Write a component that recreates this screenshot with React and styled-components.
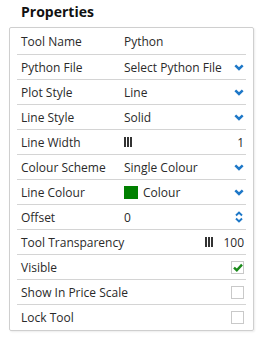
import styled, { createGlobalStyle } from 'styled-components';

const GlobalStyle = createGlobalStyle`
  body {
    margin: 0;
    background: #fff;
    font-family: "Open Sans", "Liberation Sans", sans-serif;
    color: #2a2a2a;
  }
`;

const Page = styled.div`
  width: 260px;
  height: 341px;
  padding: 0 7px 0 9px;
  box-sizing: border-box;
`;

const Title = styled.h1`
  margin: 0;
  padding: 2px 0 0 12px;
  height: 27px;
  box-sizing: border-box;
  font-size: 14px;
  font-weight: 700;
  line-height: 20px;
  color: #111;
`;

const Card = styled.div`
  border: 1px solid #cfcfcf;
  border-radius: 2px;
  box-shadow: 1px 1px 2px rgba(0, 0, 0, 0.08);
  padding: 1px 7px 0 7px;
  width: 245px;
  box-sizing: border-box;
`;

const Row = styled.div`
  display: flex;
  align-items: center;
  height: ${({ first }) => (first ? '26px' : '25px')};
  box-sizing: border-box;
  padding: 0 2px 0 4px;
  border-bottom: ${({ last }) => (last ? 'none' : '1px solid #d4d4d4')};
  font-size: 12px;
`;

const Label = styled.div`
  width: ${({ wide }) => (wide ? 'auto' : '103px')};
  flex-shrink: 0;
  white-space: nowrap;
`;

const Value = styled.div`
  flex: 1;
  display: flex;
  align-items: center;
  gap: 4px;
  white-space: nowrap;
`;

const Grow = styled.span`
  flex: 1;
`;

const Swatch = styled.span`
  width: 14px;
  height: 13px;
  background: #008000;
  margin-right: 1px;
`;

const Checkbox = styled.span`
  width: 11px;
  height: 11px;
  border: 1px solid #c9c9c9;
  display: flex;
  align-items: center;
  justify-content: center;
  margin-left: auto;
`;

const Num = styled.span`
  margin-left: ${({ gap }) => gap || 0}px;
`;

function Chevron() {
  return (
    <svg width="10" height="7" viewBox="0 0 10 7">
      <path d="M1.3 1.3 L5 4.9 L8.7 1.3" fill="none" stroke="#1e78c8" strokeWidth="2.5" />
    </svg>
  );
}

function Spinner() {
  return (
    <svg width="10" height="12" viewBox="0 0 10 12">
      <path d="M2 4.4 L5 1.6 L8 4.4" fill="none" stroke="#1e78c8" strokeWidth="2" />
      <path d="M2 7.6 L5 10.4 L8 7.6" fill="none" stroke="#1e78c8" strokeWidth="2" />
    </svg>
  );
}

function Bars() {
  return (
    <svg width="8" height="10" viewBox="0 0 8 10">
      <rect x="0" y="0" width="2" height="10" fill="#333" />
      <rect x="3" y="0" width="2" height="10" fill="#333" />
      <rect x="6" y="0" width="2" height="10" fill="#333" />
    </svg>
  );
}

function Check() {
  return (
    <svg width="10" height="9" viewBox="0 0 10 9">
      <path d="M1 4.6 L3.8 7.2 L9 1.6" fill="none" stroke="#1a8a1a" strokeWidth="2.4" />
    </svg>
  );
}

const rows = [
  { label: 'Tool Name', kind: 'text', value: 'Python' },
  { label: 'Python File', kind: 'select', value: 'Select Python File' },
  { label: 'Plot Style', kind: 'select', value: 'Line' },
  { label: 'Line Style', kind: 'select', value: 'Solid' },
  { label: 'Line Width', kind: 'width', value: '1' },
  { label: 'Colour Scheme', kind: 'select', value: 'Single Colour' },
  { label: 'Line Colour', kind: 'colour', value: 'Colour' },
  { label: 'Offset', kind: 'spin', value: '0' },
  { label: 'Tool Transparency', kind: 'transparency', value: '100' },
  { label: 'Visible', kind: 'check', checked: true },
  { label: 'Show In Price Scale', kind: 'check' },
  { label: 'Lock Tool', kind: 'check' },
];

function Field({ row }) {
  switch (row.kind) {
    case 'select':
      return (
        <Value>
          <Grow>{row.value}</Grow>
          <Chevron />
        </Value>
      );
    case 'colour':
      return (
        <Value>
          <Swatch />
          <Grow>{row.value}</Grow>
          <Chevron />
        </Value>
      );
    case 'spin':
      return (
        <Value>
          <Grow>{row.value}</Grow>
          <Spinner />
        </Value>
      );
    case 'width':
      return (
        <Value>
          <Bars />
          <Grow />
          <Num>{row.value}</Num>
        </Value>
      );
    case 'transparency':
      return (
        <Value>
          <Grow />
          <Bars />
          <Num gap={6}>{row.value}</Num>
        </Value>
      );
    case 'check':
      return (
        <Value>
          <Checkbox>{row.checked && <Check />}</Checkbox>
        </Value>
      );
    default:
      return <Value>{row.value}</Value>;
  }
}

export default function App() {
  return (
    <>
      <GlobalStyle />
      <Page>
        <Title>Properties</Title>
        <Card>
          {rows.map((row, i) => (
            <Row key={row.label} first={i === 0} last={i === rows.length - 1}>
              <Label wide={row.kind === 'transparency'}>{row.label}</Label>
              <Field row={row} />
            </Row>
          ))}
        </Card>
      </Page>
    </>
  );
}
